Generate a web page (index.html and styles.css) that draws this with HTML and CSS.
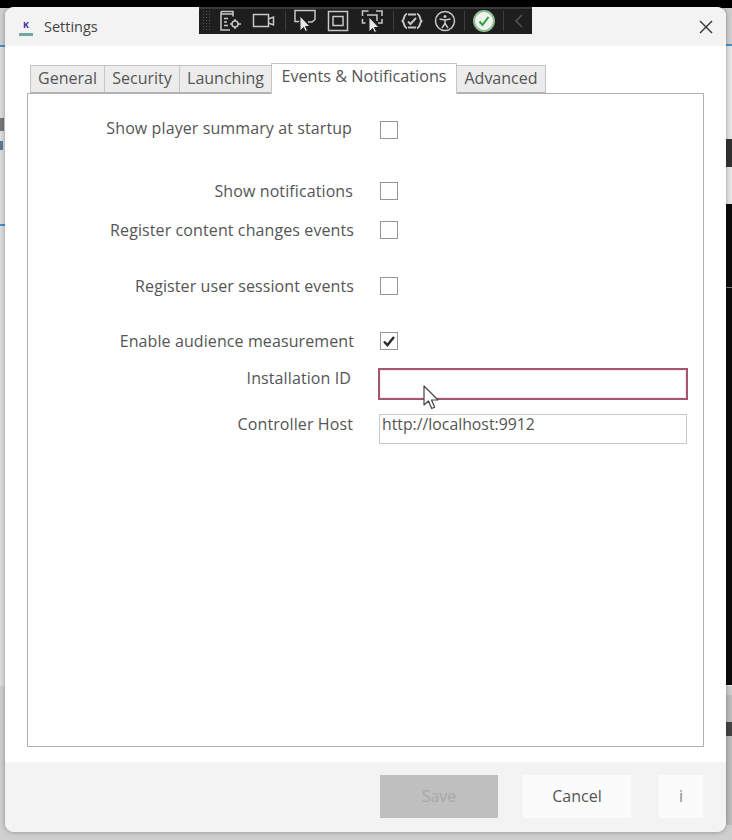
FILE: index.html
```html
<!DOCTYPE html>
<html lang="en">
<head>
  <meta charset="UTF-8" />
  <title>Settings</title>
  <link rel="stylesheet" href="styles.css">
</head>
<body>
  <!-- bits of the app behind the dialog -->
  <div class="behind">
    <div class="behind-topbar"></div>
    <i class="b-light b-light-l"></i>
    <i class="b-light b-light-r"></i>
    <i class="b-line b-line-l1"></i>
    <i class="b-line b-line-l2"></i>
    <i class="b-line b-line-r1"></i>
    <i class="b-mark b-mark-1"></i>
    <i class="b-mark b-mark-2"></i>
    <i class="b-dark b-dark-1"></i>
    <i class="b-dark b-dark-2"></i>
    <i class="b-rule"></i>
    <i class="b-grey"></i>
    <i class="b-dark b-dark-3"></i>
  </div>

  <div class="dialog">
    <div class="titlebar">
      <div class="app-logo"><span>K</span></div>
      <span class="title">Settings</span>
      <svg class="close" width="14" height="14" viewBox="0 0 14 14"><path d="M1 1l12 12M13 1L1 13" stroke="#333" stroke-width="1.4" fill="none"/></svg>
    </div>

    <div class="content">
      <div class="tabs">
        <div class="tab t-general">General</div>
        <div class="tab t-security">Security</div>
        <div class="tab t-launching">Launching</div>
        <div class="tab t-events active">Events &amp; Notifications</div>
        <div class="tab t-advanced">Advanced</div>
      </div>
      <div class="panel">
        <div class="row r1"><label>Show player summary at startup</label><span class="check"></span></div>
        <div class="row r2"><label>Show notifications</label><span class="check"></span></div>
        <div class="row r3"><label>Register content changes events</label><span class="check"></span></div>
        <div class="row r4"><label>Register user sessiont events</label><span class="check"></span></div>
        <div class="row r5"><label>Enable audience measurement</label>
          <span class="check">
            <svg width="14" height="12" viewBox="0 0 14 12"><path d="M2 6.500l3.400 3.600L12 2" stroke="#2b2b2b" stroke-width="2.400" fill="none"/></svg>
          </span>
        </div>
        <div class="row r6"><label>Installation ID</label><div class="textbox invalid"></div></div>
        <div class="row r7"><label>Controller Host</label><div class="textbox">http://localhost:9912</div></div>
      </div>
    </div>

    <div class="footer">
      <button class="btn btn-save">Save</button>
      <button class="btn btn-cancel">Cancel</button>
      <button class="btn btn-info">i</button>
    </div>
  </div>

  <!-- debug toolbar floating over the title bar -->
  <div class="devbar">
    <span class="grip"></span>
    <svg width="24" height="22" viewBox="0 0 24 22" class="ic ic1">
      <path d="M2 1.500h12v5M2 1.500v18.500h9M2 4h12" />
      <path d="M5 8.500h4M5 12h3M5 15.500h4"/>
      <circle cx="16" cy="14" r="3"/>
      <path d="M16 9v2M16 17v2M11 14h2M19 14h3"/>
    </svg>
    <svg width="24" height="22" viewBox="0 0 24 22" class="ic ic2"><path d="M1.500 4.500h15v12h-15zM16.500 9l5-2v8l-5-2"/></svg>
    <i class="sep s1"></i>
    <svg width="24" height="24" viewBox="0 0 24 24" class="ic ic3">
      <path d="M6.500 12.500H2V1.500h20v9l-3 2.500h-4"/>
      <path class="fill" d="M7 7v15l3.500-3.500 2 4 2-1-2-4H17z"/>
    </svg>
    <svg width="22" height="22" viewBox="0 0 22 22" class="ic ic4"><path d="M1.500 1.500h19v19h-19zM6 6.500h10v9H6z"/></svg>
    <svg width="24" height="24" viewBox="0 0 24 24" class="ic ic5">
      <path d="M2.500 7V2h6M16 2h6v5M22 10v4h-4M2.500 10v4h3M7 6h10v6"/>
      <path class="fill" d="M9 8v15l3.500-3.500 2 4 2-1-2-4H19z"/>
    </svg>
    <i class="sep s2"></i>
    <svg width="22" height="20" viewBox="0 0 22 20" class="ic ic6">
      <path d="M6 2.500C1.500 5 4 8 1.500 10 4 12 1.500 15 6 17.500M16 2.500C20.500 5 18 8 20.500 10 18 12 20.500 15 16 17.500"/>
      <path d="M7 10.500l2.500 2.500L15 7M7 3.500h8M7 16.500h8"/>
    </svg>
    <svg width="22" height="22" viewBox="0 0 22 22" class="ic ic7">
      <circle cx="11" cy="11" r="9.500"/>
      <circle class="dot" cx="11" cy="6.500" r="1.500"/>
      <path d="M5.500 9l5.500 1 5.500-1M11 10v3.500M11 13.500L8 18M11 13.500l3 4.500"/>
    </svg>
    <i class="sep s3"></i>
    <span class="status"><svg width="14" height="14" viewBox="0 0 14 14"><path d="M2.500 7.500l3 3.500 6-8" stroke="#2e9e3f" stroke-width="2" fill="none"/></svg></span>
    <i class="sep s4"></i>
    <svg width="10" height="16" viewBox="0 0 10 16" class="ic chevron"><path d="M8 2L2 8l6 6"/></svg>
  </div>

  <svg class="cursor" width="18" height="26" viewBox="0 0 18 26"><path d="M1 1v19l4.500-4 3.200 7.500 3-1.300-3.200-7.200H15z" fill="#fff" stroke="#444" stroke-width="1.200" stroke-linejoin="round"/></svg>
</body>
</html>
```

FILE: styles.css
```css
* {
  box-sizing: border-box;
}
html, body {
  margin: 0;
  height: 840px;
  overflow: hidden;
}
body {
  position: relative;
  width: 732px;
  background: #cfcfcf;
  font-family: "Open Sans", "Noto Sans", sans-serif;
  font-size: 16px;
  color: #555;
  padding: 7px 6px 8px 5px;
}

/* behind the dialog */
.behind i {
  position: absolute;
  display: block;
}
.behind-topbar {
  position: absolute;
  left: 0;
  top: 0;
  width: 732px;
  height: 8px;
  background: #000;
}
.b-light {
  top: 46px;
  height: 640px;
  width: 6px;
  background: #e6e6e6;
}
.b-light-l { left: 0; background: #dedede; }
.b-light-r { left: 726px; }
.b-line {
  height: 2px;
  background: #4a90c8;
}
.b-line-l1 { left: 0; top: 45px; width: 5px; }
.b-line-l2 { left: 0; top: 224px; width: 5px; }
.b-line-r1 { left: 726px; top: 44px; width: 6px; }
.b-mark { background: #777; left: 0; width: 4px; }
.b-mark-1 { top: 118px; height: 13px; }
.b-mark-2 { top: 141px; height: 9px; width: 3px; background: #5a7a95; }
.b-dark { left: 726px; width: 6px; background: #0c0c0c; }
.b-dark-1 { top: 139px; height: 28px; background: #333; }
.b-dark-2 { top: 204px; height: 481px; }
.b-rule { left: 726px; top: 287px; width: 6px; height: 1px; background: #777; }
.b-grey { left: 726px; width: 6px; top: 695px; height: 130px; background: #bdbdbd; }
.b-dark-3 { top: 722px; height: 14px; background: #444; }

/* dialog */
.dialog {
  position: relative;
  height: 825px;
  border-radius: 9px;
  background: #fff;
  box-shadow: 0 0 5px rgba(0, 0, 0, 0.35);
  display: flex;
  flex-direction: column;
  overflow: hidden;
}
.titlebar {
  height: 39px;
  flex: none;
  background: #f3f3f3;
  display: flex;
  align-items: center;
  padding: 0 13px 0 14px;
}
.app-logo {
  width: 14px;
  height: 18px;
  border-bottom: 3px solid #6fa8a0;
  text-align: center;
  margin-right: 11px;
}
.app-logo span {
  display: block;
  color: #3a2f9e;
  font-size: 9px;
  font-weight: 700;
  line-height: 13px;
}
.title {
  flex: 1;
  font-size: 14.5px;
  color: #444;
}
.close {
  display: block;
}
.content {
  flex: 1;
  padding: 17px 22px 15px 22px;
  display: flex;
  flex-direction: column;
}

/* tabs */
.tabs {
  display: flex;
  height: 30px;
  padding-left: 3px;
  align-items: flex-end;
  position: relative;
  z-index: 1;
}
.tab {
  height: 28px;
  border: 1.5px solid #c4c4c4;
  border-bottom: 1px solid #b4b4b4;
  margin-right: -1px;
  background: #ececec;
  font-size: 16px;
  line-height: 25px;
  text-align: center;
  color: #555;
  white-space: nowrap;
}
.tab.active {
  height: 31px;
  margin-bottom: -1px;
  background: #fff;
  border-bottom-color: #fff;
  line-height: 25px;
  position: relative;
}
.t-general { width: 75px; }
.t-security { width: 76px; }
.t-launching { width: 93px; }
.t-events { width: 186px; font-size: 16.2px; }
.t-advanced { width: 90px; }
.panel {
  flex: 1;
  border: 1px solid #b0b0b0;
  background: #fff;
  padding-top: 23px;
}

/* form rows */
.row {
  display: grid;
  grid-template-columns: 326px 308px;
  column-gap: 25px;
  align-items: center;
}
.row label {
  text-align: right;
  white-space: nowrap;
  letter-spacing: 0.1px;
  line-height: 22px;
}
.r1 label { padding: 0 2px 4px 0; }
.r2 { margin-top: 37px; }
.r2 label, .r7 label { padding-right: 1px; }
.r3 { margin-top: 17px; }
.r4 { margin-top: 34px; }
.r5 { margin-top: 33px; }
.r6 { margin-top: 16px; }
.r6 label { padding-right: 3px; }
.r7 { margin-top: 14px; }
.check {
  width: 18px;
  height: 18px;
  margin-left: 1px;
  border: 1.5px solid #959595;
  background: #fff;
  display: flex;
  align-items: center;
  justify-content: center;
}
.textbox {
  height: 30px;
  border: 1.5px solid #c8c8c8;
  font-size: 15.8px;
  line-height: 18px;
  padding: 0 2px;
}
.textbox.invalid {
  height: 32px;
  margin-left: -1px;
  margin-right: -1px;
  border: 2px solid #a8566c;
  box-shadow: inset 0 0 0 1px #e8eef4;
}
.r6 label,
.r7 label {
  align-self: start;
  margin-top: -1px;
}

/* footer */
.footer {
  height: 70px;
  flex: none;
  background: #f3f3f3;
  display: flex;
  padding: 13px 23px 0 375px;
}
.btn {
  height: 43px;
  border: none;
  font-family: inherit;
  font-size: 16px;
  color: #555;
  background: #fbfbfb;
  padding: 0 0 2px;
}
.btn-save {
  width: 118px;
  background: #bfbfbf;
  color: #a8a8a8;
}
.btn-cancel {
  width: 108px;
  margin-left: 25px;
}
.btn-info {
  width: 44px;
  margin-left: 28px;
  color: #888;
}

/* dev toolbar */
.devbar {
  position: absolute;
  left: 199px;
  top: 7px;
  width: 333px;
  height: 27px;
  background: #1e1e1e;
  border-top: 2px solid #3a3a3a;
  display: flex;
  align-items: center;
  padding-bottom: 1px;
}
.grip {
  width: 10px;
  height: 22px;
  margin-left: 3px;
  background-image: radial-gradient(#555 1px, transparent 1px);
  background-size: 3px 3px;
}
.ic {
  fill: none;
  stroke: #c8c8c8;
  stroke-width: 1.5;
  flex: none;
}
.ic .fill {
  fill: #e8e8e8;
  stroke: #222;
  stroke-width: 1;
}
.ic .dot {
  fill: #c8c8c8;
  stroke: none;
}
.sep {
  width: 1px;
  height: 20px;
  background: #3d3d3d;
  flex: none;
}
.ic1 { margin-left: 7px; }
.ic2 { margin-left: 9px; }
.s1 { margin-left: 9px; }
.ic3 { margin-left: 7px; }
.ic4 { margin-left: 10px; }
.ic5 { margin-left: 11px; }
.s2 { margin-left: 9px; }
.ic6 { margin-left: 7px; stroke-width: 2; }
.ic7 { margin-left: 11px; }
.s3 { margin-left: 8px; }
.status {
  width: 22px;
  height: 22px;
  border-radius: 50%;
  background: #eef3ee;
  border: 2px solid #8fbf8f;
  margin-left: 8px;
  flex: none;
  display: flex;
  align-items: center;
  justify-content: center;
}
.s4 { margin-left: 8px; }
.chevron {
  margin-left: 10px;
  stroke: #555;
}

.cursor {
  position: absolute;
  left: 423px;
  top: 385px;
}
```
